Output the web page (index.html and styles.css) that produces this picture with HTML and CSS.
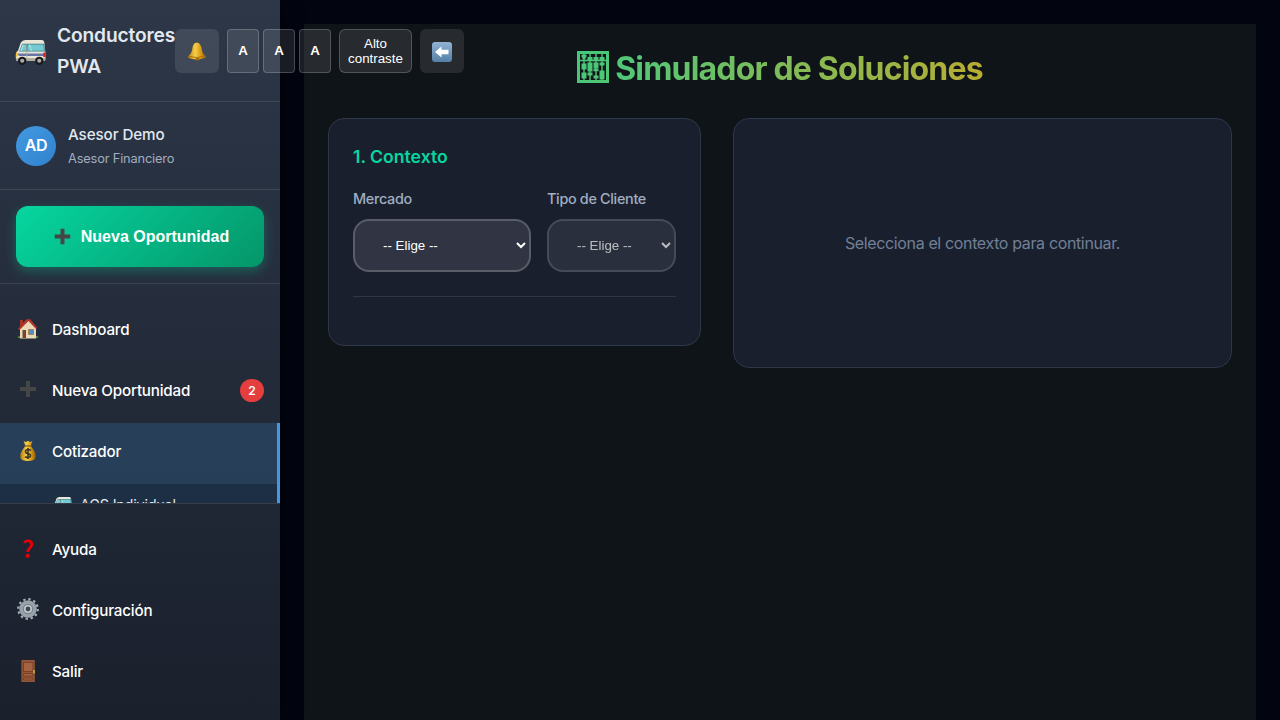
FILE: index.html
```html
<!DOCTYPE html>
<html lang="es">
<head>
<meta charset="utf-8">
<title>Conductores PWA</title>
<link rel="stylesheet" href="styles.css">
</head>
<body>
<svg class="defs" width="0" height="0" aria-hidden="true">
  <defs>
    <linearGradient id="gold" x1="0" x2="1"><stop offset="0" stop-color="#b57a0c"/><stop offset=".4" stop-color="#f6cf4a"/><stop offset=".7" stop-color="#d99b17"/><stop offset="1" stop-color="#8f5a08"/></linearGradient>
    <linearGradient id="tile" x1="0" x2="0" y1="0" y2="1"><stop offset="0" stop-color="#91b4d3"/><stop offset="1" stop-color="#557fa6"/></linearGradient>
    <linearGradient id="beads" gradientUnits="userSpaceOnUse" x1="0" y1="0" x2="32" y2="32"><stop offset="0" stop-color="#45c87b"/><stop offset="1" stop-color="#50c674"/></linearGradient>
    <symbol id="van" viewBox="0 0 30 26">
      <path d="M5.5 3.5Q7 1 10 1H26Q28 1 28.5 4L29.5 14V19.5Q29.5 21 28 21H2.5Q.8 21 .8 19V14.5Q1 12 3 11Z" fill="#e9e6d8"/>
      <path d="M7 4.5H28.3L29 12H4Z" fill="#397c87"/>
      <path d="M7.4 5.3H11V11.3H4.6ZM12.5 5.3H27.5L28 11.3H12Z" fill="#77c9d1"/>
      <path d="M8 5.5L6 11.3M14 5.5L16 11.3" stroke="#a9e5e6"/>
      <path d="M2 14H29.5V16.5H4Z" fill="#6875a5"/><path d="M11.5 5V20" stroke="#a9aaa0" stroke-width=".8"/>
      <path d="M1 13H3.2L2.5 17H.8Z" fill="#ffbd25"/><path d="M27.4 13H29.5V17.5H27.4Z" fill="#e51b22"/>
      <path d="M1 18.5H29V21H1Z" fill="#aaa79c"/>
      <circle cx="7" cy="21" r="4" fill="#18191b"/><circle cx="23.5" cy="21" r="4" fill="#18191b"/>
      <circle cx="7" cy="21" r="2" fill="#aaa"/><circle cx="23.5" cy="21" r="2" fill="#aaa"/>
    </symbol>
    <symbol id="plus" viewBox="0 0 16 16"><path d="M6 0H10V6H16V10H10V16H6V10H0V6H6Z" fill="#464646"/></symbol>
  </defs>
</svg>
<div class="app">
  <aside class="sidebar">
    <header class="brand">
      <svg class="brand-icon"><use href="#van"/></svg>
      <div class="brand-name">Conductores PWA</div>
      <div class="tools">
        <button class="tool square"><svg width="20" height="20" viewBox="0 0 20 20"><path d="M10 1.5Q6.5 1.8 5.6 6Q5 11.5 2.5 14L.8 16Q2 17.8 9 18.4Q16 18 19.2 16.2L17.3 14Q14.8 11 14.3 6Q13 1.8 10 1.5Z" fill="url(#gold)"/><path d="M1.5 15.2Q9 18 18.5 15.2" fill="none" stroke="#a8720d"/><ellipse cx="10.5" cy="18.1" rx="2.2" ry="1.3" fill="#a66d0b"/></svg></button>
        <div class="sizes">
          <button class="tool size">A</button><button class="tool size">A</button><button class="tool size">A</button>
        </div>
        <button class="tool contrast">Alto contraste</button>
        <button class="tool square"><svg class="back" width="20" height="20" viewBox="0 0 20 20"><rect width="20" height="20" rx="3" fill="url(#tile)"/><path d="M3 10L9.5 4.5V7.8H16.5V12.2H9.5V15.5Z" fill="#fff"/></svg></button>
      </div>
    </header>
    <section class="user">
      <div class="avatar">AD</div>
      <div class="user-text"><div class="user-name">Asesor Demo</div><div class="user-role">Asesor Financiero</div></div>
    </section>
    <section class="action">
      <button class="create"><svg width="17" height="17" viewBox="0 0 17 17"><use href="#plus" x=".5" y=".5" width="16" height="16"/></svg><span>Nueva Oportunidad</span></button>
    </section>
    <nav class="menu">
      <a class="item"><svg class="icon" viewBox="0 0 24 24"><path d="M2 21Q1 19 4 19H21Q23 19 22 21Z" fill="#4f8d31"/><path d="M4 3H7V10H4Z" fill="#a4352a"/><path d="M4 11L13 3L20 11V21.5H4Z" fill="#ead9b9"/><path d="M2 12L10 2.5L14 2L21.5 11L20 12L12.5 4L3.5 13Z" fill="#b33429"/><path d="M6.5 13H10V21H6.5Z" fill="#75442b"/><path d="M12.5 12.5H17.5V17.5H12.5Z" fill="#4a91c7" stroke="#a68155"/></svg><span>Dashboard</span></a>
      <a class="item"><svg class="icon" viewBox="0 0 24 24"><use href="#plus" x="4" y="3" width="16" height="16"/></svg><span>Nueva Oportunidad</span><b class="badge">2</b></a>
      <a class="item active"><svg class="icon" viewBox="0 0 24 24"><path d="M7.5 2L10 3L12 1.8L14 3L16.5 2L14.5 7Q21 14 19.5 19Q18.5 22 12 22T4.5 19Q3 14 9.5 7Z" fill="url(#gold)"/><path d="M8.5 7H15.5" stroke="#9b6b20" stroke-width="1.5"/><path d="M15 11.5Q12 9.5 9.8 11.4Q8.5 14 12 14.7Q15.5 15.5 14.2 17.7Q12 19.5 9 17.8M12 9V20" fill="none" stroke="#3e3826" stroke-width="1.6"/></svg><span>Cotizador</span></a>
      <div class="submenu"><a class="subitem"><svg width="19" height="17"><use href="#van"/></svg><span>AGS Individual</span></a></div>
    </nav>
    <footer class="footer">
      <a class="item"><svg class="icon" viewBox="0 0 24 24"><path d="M8.5 6Q9.3 3.5 12.5 3.8Q15.9 4.2 15.8 7.5Q15.5 9.8 13 12Q11.8 13.2 11.7 15" fill="none" stroke="#e80006" stroke-width="2.7"/><circle cx="11.7" cy="18.8" r="2.1" fill="#e80006"/></svg><span>Ayuda</span></a>
      <a class="item"><svg class="icon" viewBox="0 0 24 24"><circle cx="12" cy="11" r="9.8" fill="none" stroke="#a5afb8" stroke-width="2.2" stroke-dasharray="2.4 2.731"/><circle cx="12" cy="11" r="7" fill="#77838d" stroke="#98a2aa" stroke-width="3.6"/><circle cx="12" cy="11" r="3.2" fill="#3b4651" stroke="#c6cbd0" stroke-width="1.6"/></svg><span>Configuración</span></a>
      <a class="item"><svg class="icon" viewBox="0 0 24 24"><path d="M5.5 1H18.8V23H5.5Z" fill="#95583a"/><path d="M7.5 3.3H17V12.5H7.5ZM7.5 14.5H17V17H7.5ZM7.5 19H17V21H7.5Z" fill="#a4623f" stroke="#713a24" stroke-width=".8"/><path d="M5.8 1V23" stroke="#794026"/><path d="M17 11H19V14.5H17Z" fill="#b99a31"/></svg><span>Salir</span></a>
    </footer>
  </aside>
  <main class="main">
    <h1 class="title">
      <svg width="32" height="32" viewBox="0 0 32 32" fill="none" stroke="url(#beads)"><path d="M1.5 1.5H30.5V30.5H1.5Z" stroke-width="3"/><path d="M3 9.5H29" stroke-width="1.6"/><path d="M7 3V29M13 3V29M19 3V29M25 3V29" stroke-width="1.4"/><path d="M4.5 5H9.5M10.5 7.5H15.5M16.5 7.5H21.5M22.5 7.5H27.5M4.5 14H9.5M4.5 17H9.5M4.5 23H9.5M4.5 26H9.5M10.5 13H15.5M10.5 16H15.5M10.5 19H15.5M10.5 23H15.5M16.5 13H21.5M16.5 16H21.5M16.5 26H21.5M22.5 13H27.5M22.5 21H27.5M22.5 24H27.5M22.5 27H27.5" stroke-width="2.8"/><path d="M16.5 19H21.5M5.5 7H8.5" stroke-width="2.4"/></svg>
      <span>Simulador de Soluciones</span>
    </h1>
    <div class="columns">
      <section class="card form-card">
        <h2 class="card-title">1. Contexto</h2>
        <div class="fields">
          <label class="field market"><span>Mercado</span><select class="select"><option>-- Elige --</option></select></label>
          <label class="field client"><span>Tipo de Cliente</span><select class="select" disabled><option>-- Elige --</option></select></label>
        </div>
        <div class="divider"></div>
      </section>
      <section class="card empty">Selecciona el contexto para continuar.</section>
    </div>
  </main>
</div>
</body>
</html>
```
FILE: styles.css
```css
* { box-sizing: border-box; }
body { margin: 0; background: #02040f; color: #fff; font-family: Inter, "Noto Sans", sans-serif; font-size: 16px; overflow: hidden; }
button, select { font-family: "Liberation Sans", Arial, sans-serif; font-size: 13.333px; }
.defs { position: absolute; }
.app { display: flex; height: 720px; }
.sidebar { width: 280px; flex: none; display: flex; flex-direction: column; background: linear-gradient(180deg, #2d3748, #1a202c); box-shadow: 4px 0 20px rgba(0,0,0,.3); position: relative; z-index: 1; }
.brand { height: 102px; flex: none; display: flex; align-items: center; padding: 0 16px 0 15px; border-bottom: 1px solid rgba(255,255,255,.1); }
.brand-icon { width: 31px; height: 27px; margin: 4px 11px 0 0; flex: none; }
.brand-name { width: 118px; flex: none; font-size: 19.2px; font-weight: 600; line-height: 31px; letter-spacing: -.16px; color: #e2e8f0; }
.tools { display: flex; gap: 8px; flex: none; }
.sizes { display: flex; gap: 4px; }
.tool { height: 44px; padding: 0; color: #fff; background: rgba(255,255,255,.1); border: 1px solid rgba(255,255,255,.2); border-radius: 4px; display: flex; align-items: center; justify-content: center; }
.square { width: 44px; border: 0; border-radius: 6px; }
.back { margin-top: 2px; }
.size { width: 32px; font-weight: 700; }
.contrast { width: 73px; border-radius: 6px; line-height: 15px; }
.user { height: 88px; flex: none; display: flex; align-items: center; gap: 12px; padding: 0 16px; border-bottom: 1px solid rgba(255,255,255,.1); }
.avatar { width: 40px; height: 40px; border-radius: 50%; display: grid; place-items: center; padding-bottom: 1px; background: linear-gradient(135deg, #4299e1, #3182ce); font-weight: 600; letter-spacing: -.3px; }
.user-text { padding-top: 3px; }
.user-name { font-size: 15.2px; font-weight: 550; line-height: 24px; letter-spacing: -.1px; color: #e2e8f0; }
.user-role { font-size: 12.8px; line-height: 24px; letter-spacing: -.16px; color: #a0aec0; }
.action { height: 94px; flex: none; padding: 16px; border-bottom: 1px solid rgba(255,255,255,.1); }
.create { width: 248px; height: 61px; border: 0; border-radius: 12px; display: flex; align-items: center; justify-content: center; gap: 10px; padding: 0 0 0 3px; background: linear-gradient(135deg, #06d6a0, #059669); color: #fff; font-size: 16px; font-weight: 600; box-shadow: 0 4px 12px rgba(6,214,160,.3); }
.menu { flex: 1; min-height: 0; overflow: hidden; padding-top: 17px; }
.item { height: 61px; display: flex; align-items: center; gap: 12px; padding: 0 16px; font-size: 15.2px; font-weight: 450; letter-spacing: -.2px; color: #fff; }
.menu .item { padding-bottom: 4px; }
.icon { width: 24px; height: 24px; flex: none; margin-top: -2px; }
.badge { margin-left: auto; width: 24px; height: 23px; border-radius: 12px; background: #e53e3e; display: grid; place-items: center; font-size: 12px; font-weight: 600; letter-spacing: 0; }
.active { background: rgba(66,153,225,.2); border-right: 3px solid #4299e1; }
.submenu { background: rgba(26,54,80,.6); border-right: 3px solid #4299e1; height: 61px; }
.subitem { display: flex; align-items: center; gap: 8px; height: 40px; padding-left: 53px; font-size: 14.4px; letter-spacing: -.2px; color: #e2e8f0; }
.footer { height: 217px; flex: none; border-top: 1px solid rgba(255,255,255,.1); padding-top: 15px; }
.main { margin: 24px 24px 0; width: 952px; height: 696px; padding: 24px; background: #0f1419; }
.title { margin: 0 0 30px; height: 40px; display: flex; align-items: center; justify-content: center; gap: 6px; font-size: 32px; line-height: 40px; font-weight: 700; letter-spacing: -.82px; }
.title svg { margin-top: -2px; }
.title span { padding-top: 1px; background: linear-gradient(90deg, #50c779, #b8ad32); background-clip: text; -webkit-background-clip: text; color: transparent; }
.columns { display: grid; grid-template-columns: 373px 499px; gap: 32px; align-items: start; }
.card { background: #1a1f2e; border: 1px solid #2d3748; border-radius: 16px; }
.form-card { height: 228px; padding: 24px; }
.card-title { margin: 0 0 28px; font-size: 17.6px; line-height: 28px; height: 18px; font-weight: 600; color: #06d6a0; }
.fields { display: flex; gap: 16px; }
.field { display: flex; flex-direction: column; color: #a0aec0; font-size: 14.4px; font-weight: 450; letter-spacing: -.32px; line-height: 23px; gap: 9px; margin-top: -2px; }
.market { width: 178px; }
.client { width: 129px; }
.select { height: 53px; padding: 0 24px; border: 2px solid rgba(255,255,255,.2); border-radius: 16px; background: rgba(255,255,255,.1); color: #fff; }
.select:disabled { opacity: .7; }
.divider { margin-top: 24px; border-top: 1px solid #2d3748; }
.empty { height: 250px; display: grid; place-items: center; color: #718096; letter-spacing: -.36px; }
```
